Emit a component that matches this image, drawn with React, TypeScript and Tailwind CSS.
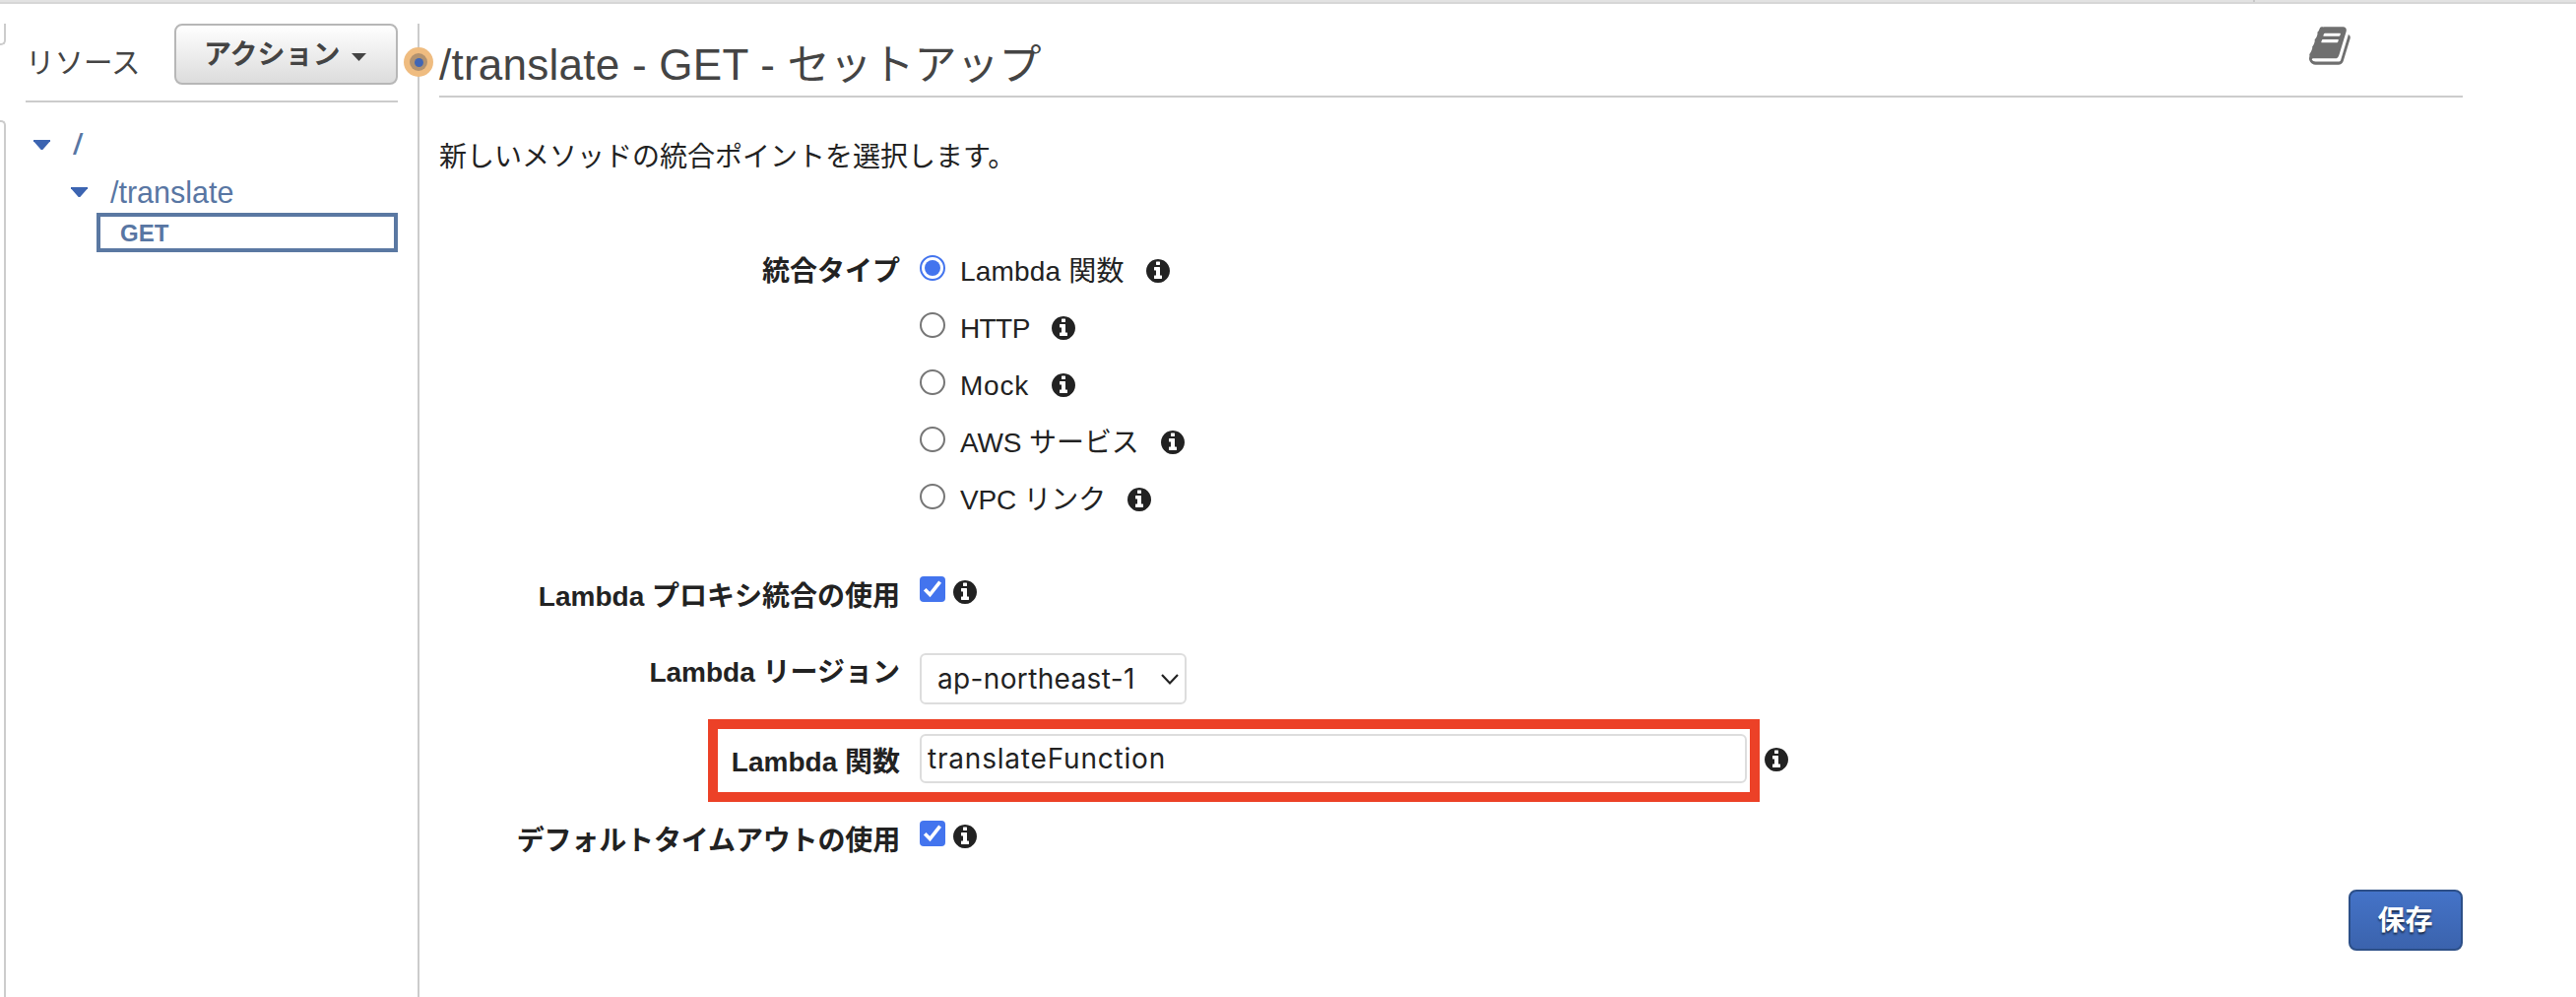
import React from "react";

const INFO_PATH =
  "M1152 1376v-160q0-14-9-23t-23-9h-96v-512q0-14-9-23t-23-9h-320q-14 0-23 9t-9 23v160q0 14 9 23t23 9h96v320h-96q-14 0-23 9t-9 23v160q0 14 9 23t23 9h448q14 0 23-9t9-23zm-128-896v-160q0-14-9-23t-23-9h-192q-14 0-23 9t-9 23v160q0 14 9 23t23 9h192q14 0 23-9t9-23zm640 416q0 209-103 385.5t-279.5 279.5-385.5 103-385.5-103-279.5-279.5-103-385.5 103-385.5 279.5-279.5 385.5-103 385.5 103 279.5 279.5 103 385.5z";

const BOOK_PATH =
  "M1639 478q40 57 18 129l-275 906q-19 64-76.5 107.5t-122.5 43.5h-923q-77 0-148.5-53.5t-99.5-131.5q-24-67-2-127 0-4 3-27t4-37q1-8-3-21.5t-3-19.5q2-11 8-21t16.5-23.5 16.5-23.5q23-38 45-91.5t30-91.5q3-10 .5-30t-.5-28q3-11 17-28t17-23q21-36 42-92t25-90q1-9-2.5-32t.5-28q4-13 22-30.5t22-22.5q19-26 42.5-84.5t27.5-96.5q1-8-3-25.5t-2-26.5q2-8 9-18t18-23 17-21q8-12 16.5-30.5t15-35 16-36 19.5-32 26.5-23.5 36-11.5 47.5 5.5l-1 3q38-9 51-9h761q74 0 114 56t18 130l-274 906q-36 119-71.5 153.5t-128.5 34.5h-869q-27 0-38 15-11 16-1 43 24 70 144 70h923q29 0 56-15.5t35-41.5l300-987q7-22 5-57 38 15 59 43zm-1064 2q-4 13 2 22.5t20 9.5h608q13 0 25.5-9.5t16.5-22.5l21-64q4-13-2-22.5t-20-9.5h-608q-13 0-25.5 9.5t-16.5 22.5zm-83 256q-4 13 2 22.5t20 9.5h608q13 0 25.5-9.5t16.5-22.5l21-64q4-13-2-22.5t-20-9.5h-608q-13 0-25.5 9.5t-16.5 22.5z";

function Info({ className = "" }: { className?: string }) {
  return (
    <svg viewBox="128 128 1536 1536" className={`h-6 w-6 shrink-0 fill-[#222] ${className}`}>
      <path d={INFO_PATH} />
    </svg>
  );
}

function Label({ children, className = "w-[468px] pt-px" }: { children: React.ReactNode; className?: string }) {
  return <div className={`shrink-0 text-right font-bold whitespace-nowrap ${className}`}>{children}</div>;
}

function Checked() {
  return (
    <span role="checkbox" aria-checked="true" className="flex h-[26px] w-[26px] shrink-0 items-center justify-center rounded-[4px] bg-[#4374ee]">
      <svg viewBox="0 0 26 26" className="h-[26px] w-[26px]" fill="none" stroke="#fff" strokeWidth="3.6">
        <path d="M5.2 13.2 10.4 18.6 20.6 5.6" />
      </svg>
    </span>
  );
}

function Triangle({ className = "" }: { className?: string }) {
  return (
    <svg viewBox="0 0 17 10" className={`h-[10px] w-[17px] shrink-0 fill-[#3c64b1] ${className}`}>
      <path d="M0 0h17v1.2L9.3 10H7.7L0 1.2z" />
    </svg>
  );
}

const TYPES = [
  { name: "Lambda 関数", style: "w-[189px] tracking-[0.2px]" },
  { name: "HTTP", style: "w-[93px] tracking-[-0.6px]" },
  { name: "Mock", style: "w-[93px] tracking-[0.8px]" },
  { name: "AWS サービス", style: "w-[204px] tracking-[-0.1px]" },
  { name: "VPC リンク", style: "w-[170px] tracking-[-0.2px]" },
];

export default function App() {
  return (
    <div className="flex h-[1012px] w-[2616px] flex-col overflow-hidden bg-white font-['Liberation_Sans','Noto_Sans_CJK_JP',sans-serif] text-[28px] leading-10 text-[#222]">
      <div className="h-1 shrink-0 border-b-2 border-[#d6d6d6] bg-[#e2e2e2]">
        <div className="ml-[2288px] h-[2px] w-[2px] bg-[#c8c8c8]" />
      </div>
      <div className="flex min-h-0 flex-1 pt-5">
        {/* edge of the collapsed navigation */}
        <div className="flex w-[6px] shrink-0 flex-col">
          <div className="h-[22px] rounded-br-[5px] border-r-2 border-b-2 border-[#ccc]" />
          <div className="mt-[76px] flex-1 rounded-tr-[5px] border-t-2 border-r-2 border-[#ccc]" />
        </div>

        <aside className="ml-5 w-[378px] shrink-0">
          <div className="flex h-20 justify-between border-b-2 border-[#ccc]">
            <div className="mt-[20px] text-[29.5px] text-[#444]">リソース</div>
            <button className="flex h-[62px] w-[227px] rounded-[8px] border-2 border-[#b7b7b7] bg-linear-to-b from-white to-[#dcdcdc] pl-[28px] font-bold text-[#444]">
              <span className="mt-[10px] whitespace-nowrap">アクション</span>
              <svg viewBox="0 0 15 8" className="mt-[28px] ml-[11px] h-2 w-[15px] shrink-0 fill-[#444]">
                <path d="M0 0h15L7.5 8z" />
              </svg>
            </button>
          </div>
          <div className="flex pl-2 text-[30px] text-[#5876a3]">
            <Triangle className="mt-[38px]" />
            <span className="mt-[23px] ml-[23px] origin-left scale-x-125">/</span>
          </div>
          <div className="mt-[7px] flex pl-[46px] text-[30.5px] text-[#5876a3]">
            <Triangle className="mt-[16px]" />
            <span className="mt-px ml-[23px]">/translate</span>
          </div>
          <div className="mt-[1px] ml-[72px] h-10 border-4 border-[#5a78a2] pl-5 text-2xl leading-[33px] font-bold text-[#5876a3]">GET</div>
        </aside>

        <div className="relative ml-5 w-[2px] shrink-0 bg-[#ccc]">
          <div className="absolute top-6 -left-[14px] flex h-[30px] w-[30px] items-center justify-center rounded-full bg-[#efbc80]">
            <div className="flex h-[18px] w-[18px] items-center justify-center rounded-full bg-[#b2926f]">
              <div className="h-[9px] w-[9px] rounded-full bg-[#4066b5]" />
            </div>
          </div>
        </div>

        <main className="ml-5 w-[2055px] shrink-0">
          <header className="flex h-[75px] justify-between border-b-2 border-[#ccc]">
            <h1 className="mt-[12px] text-[44px] leading-[60px] whitespace-nowrap text-[#444]">
              <span className="tracking-[0.25px]">/translate - GET - </span>
              <span className="text-[43px]">セットアップ</span>
            </h1>
            <svg viewBox="0 0 1792 1792" className="mr-[111px] h-[45px] w-[45px] fill-[#6f6f6f]">
              <path d={BOOK_PATH} />
            </svg>
          </header>
          <p className="mt-[41px]">新しいメソッドの統合ポイントを選択します。</p>

          <div className="mt-[75px] flex gap-5">
            <Label>統合タイプ</Label>
            <div>
              {TYPES.map((t, i) => (
                <div key={t.name} className="flex h-[58px]">
                  <span
                    role="radio"
                    aria-checked={i === 0}
                    className={
                      i === 0
                        ? "mt-1 flex h-[26px] w-[26px] items-center justify-center rounded-full border-2 border-[#4374ee]"
                        : "mt-1 h-[26px] w-[26px] rounded-full border-2 border-[#767676]"
                    }
                  >
                    {i === 0 && <span className="h-4 w-4 rounded-full bg-[#4374ee]" />}
                  </span>
                  <span className={`ml-[15px] pt-px whitespace-nowrap ${t.style}`}>{t.name}</span>
                  <Info className="mt-2" />
                </div>
              ))}
            </div>
          </div>

          <div className="mt-10 flex h-10">
            <Label>Lambda プロキシ統合の使用</Label>
            <div className="ml-5 flex gap-2">
              <Checked />
              <Info className="mt-1" />
            </div>
          </div>

          <div className="mt-[38px] flex gap-5">
            <Label className="w-[468px]">Lambda リージョン</Label>
            <div className="flex h-[52px] w-[271px] items-center justify-between rounded-[6px] border-2 border-[#ddd] pr-[6px] pl-4 font-[Inter,sans-serif]">
              <span className="tracking-[0.35px] whitespace-nowrap">ap-northeast-1</span>
              <svg viewBox="0 0 18 11" className="h-[11px] w-[18px]" fill="none" stroke="#222" strokeWidth="2.2">
                <path d="M1 1l8 8.4L17 1" />
              </svg>
            </div>
          </div>

          <div className="mt-[15px] ml-[273px] flex h-[84px]">
            <div className="flex w-[1068px] border-[10px] border-[#ec4127]">
              <Label className="mt-[14px] w-[185px]">Lambda 関数</Label>
              <input
                readOnly
                defaultValue="translateFunction"
                className="mt-[5px] ml-5 h-[50px] w-[840px] rounded-[6px] border-2 border-[#ddd] px-[6px] font-[Inter,sans-serif] tracking-[0.8px] outline-none"
              />
            </div>
            <Info className="mt-[29px] ml-[5px]" />
          </div>

          <div className="mt-[19px] flex h-10">
            <Label>
              <span className="tracking-[-0.15px]">デフォルトタイムアウトの使用</span>
            </Label>
            <div className="ml-5 flex gap-2">
              <Checked />
              <Info className="mt-1" />
            </div>
          </div>

          <div className="mt-[30px] flex justify-end">
            <button className="h-[62px] w-[116px] rounded-[8px] border-2 border-[#2c4f88] bg-linear-to-b from-[#4473c8] to-[#3b63ad] pt-px pr-px font-bold text-white [text-shadow:0_2px_2px_rgba(0,0,0,0.6)]">
              保存
            </button>
          </div>
        </main>
      </div>
    </div>
  );
}
